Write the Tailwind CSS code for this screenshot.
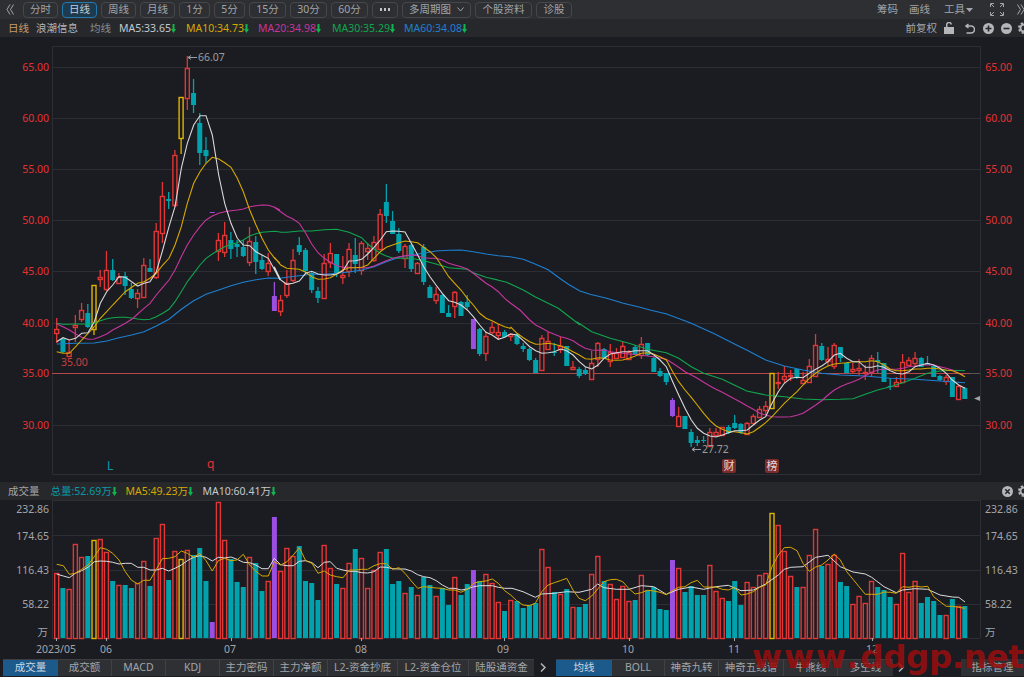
<!DOCTYPE html>
<html lang="zh">
<head>
	<meta charset="UTF-8">
	<title>浪潮信息 日线</title>
	<script src="https://cdn.jsdelivr.net/npm/@tailwindcss/browser@4"></script>
</head>
<body class="relative w-[1024px] h-[677px] overflow-hidden bg-[#1b1c21] text-[10.5px] leading-none text-[#a3a5a9] font-['Noto_Sans','Noto_Sans_CJK_SC',sans-serif]">

	<!-- toolbar -->
	<div class="flex items-center h-[19px] bg-[#2d2f33]">
		<svg class="ml-[6px] mr-[9px] w-[8px] h-[11px]" viewBox="0 0 8 11" fill="none" stroke="#a3a5a9"><path d="M4 .5 1 5.5l3 5M7.5 .5l-3 5 3 5"/></svg>
		<div class="flex gap-[4px]">
			<div class="flex items-center justify-center w-[35px] h-[16px] border border-[#45474c] rounded-sm">分时</div>
			<div class="flex items-center justify-center w-[35px] h-[16px] border border-[#2479ad] rounded-sm bg-[#1d3a4e] text-[#c8ccd0]">日线</div>
			<div class="flex items-center justify-center w-[35px] h-[16px] border border-[#45474c] rounded-sm">周线</div>
			<div class="flex items-center justify-center w-[35px] h-[16px] border border-[#45474c] rounded-sm">月线</div>
			<div class="flex items-center justify-center w-[31px] h-[16px] border border-[#45474c] rounded-sm">1分</div>
			<div class="flex items-center justify-center w-[31px] h-[16px] border border-[#45474c] rounded-sm">5分</div>
			<div class="flex items-center justify-center w-[37px] h-[16px] border border-[#45474c] rounded-sm">15分</div>
			<div class="flex items-center justify-center w-[37px] h-[16px] border border-[#45474c] rounded-sm">30分</div>
			<div class="flex items-center justify-center w-[37px] h-[16px] border border-[#45474c] rounded-sm">60分</div>
			<div class="flex items-center justify-center gap-[1.5px] w-[26px] h-[16px] border border-[#45474c] rounded-sm">
				<span class="w-[2.5px] h-[2.5px] bg-[#c0c2c6]"></span><span class="w-[2.5px] h-[2.5px] bg-[#c0c2c6]"></span><span class="w-[2.5px] h-[2.5px] bg-[#c0c2c6]"></span>
			</div>
			<div class="flex items-center justify-center gap-[6px] w-[69px] h-[16px] border border-[#45474c] rounded-sm">多周期图
				<svg class="w-[7px] h-[5px]" viewBox="0 0 7 5" fill="none" stroke="#a3a5a9"><path d="M.5 .5 3.5 4l3-3.5"/></svg>
			</div>
			<div class="flex items-center justify-center w-[57px] h-[16px] border border-[#45474c] rounded-sm">个股资料</div>
			<div class="flex items-center justify-center w-[36px] h-[16px] border border-[#45474c] rounded-sm">诊股</div>
		</div>
		<div class="flex items-center ml-auto">
			<span class="mr-[11px]">筹码</span>
			<span class="mr-[14px]">画线</span>
			<span>工具</span>
			<svg class="ml-[1px] mr-[17px] w-[7px] h-[4px]" viewBox="0 0 7 4" fill="#a3a5a9"><path d="M0 0h7L3.5 4z"/></svg>
			<svg class="mr-[13px] w-[14px] h-[13px]" viewBox="0 0 14 13" fill="none" stroke="#a3a5a9"><path d="M.5 4V.5H4M1 1l3 3M13.5 4V.5H10M13 1l-3 3M.5 9v3.5H4M1 12l3-3M13.5 9v3.5H10M13 12l-3-3"/></svg>
			<svg class="w-[7px] h-[11px]" viewBox="0 0 7 11" fill="none" stroke="#a3a5a9"><path d="M.5 .5 3.5 5.5l-3 5M4 .5l3 5-3 5"/></svg>
		</div>
	</div>

	<!-- ma legend -->
	<div class="flex items-center h-[18px] pl-[8px] bg-[#26282c]">
		<span class="mr-[7px] text-[#c59c6a]">日线</span>
		<span class="mr-[12px] text-[#b2b4b8]">浪潮信息</span>
		<span class="mr-[8px] text-[#8b8d91]">均线</span>
		<span class="flex items-center w-[67px] text-[#c4c8ce]">MA5:33.65<svg class="w-[5px] h-[9px]" viewBox="0 0 5 9" fill="#10b54f"><path d="M1.5 0h2v5H5L2.5 9 0 5h1.500z"/></svg></span>
		<span class="flex items-center w-[72px] text-[#d6a800]">MA10:34.73<svg class="w-[5px] h-[9px]" viewBox="0 0 5 9" fill="#10b54f"><path d="M1.5 0h2v5H5L2.5 9 0 5h1.500z"/></svg></span>
		<span class="flex items-center w-[74px] text-[#c8359e]">MA20:34.98<svg class="w-[5px] h-[9px]" viewBox="0 0 5 9" fill="#10b54f"><path d="M1.5 0h2v5H5L2.5 9 0 5h1.500z"/></svg></span>
		<span class="flex items-center w-[72px] text-[#10a64e]">MA30:35.29<svg class="w-[5px] h-[9px]" viewBox="0 0 5 9" fill="#10b54f"><path d="M1.5 0h2v5H5L2.5 9 0 5h1.500z"/></svg></span>
		<span class="flex items-center text-[#1e80d2]">MA60:34.08<svg class="w-[5px] h-[9px]" viewBox="0 0 5 9" fill="#10b54f"><path d="M1.5 0h2v5H5L2.5 9 0 5h1.500z"/></svg></span>
		<div class="flex items-center ml-auto">
			<span class="mr-[7px]">前复权</span>
			<svg class="mr-[11px] w-[10px] h-[12px]" viewBox="0 0 10 12" fill="#b4b6ba"><path d="M0 5h10v7H0zM2 5V3a3 3 0 0 1 6-.5H6.500A1.500 1.500 0 0 0 3.500 3v2z"/></svg>
			<svg class="mr-[8px] w-[10px] h-[11px]" viewBox="0 0 10 11" fill="none" stroke="#b4b6ba" stroke-width="1.500"><path d="M3.500 1 1 3l2.500 2M1 3h5a3.300 3.300 0 0 1 0 7H1.500"/></svg>
			<svg class="mr-[7px] w-[11px] h-[11px]" viewBox="0 0 11 11"><circle cx="5.500" cy="5.500" r="5.500" fill="#b4b6ba"/><path d="M2.500 5.500h6M5.500 2.500v6" stroke="#26282c" stroke-width="1.600"/></svg>
			<svg class="mr-[6px] w-[11px] h-[11px]" viewBox="0 0 11 11"><circle cx="5.500" cy="5.500" r="5.500" fill="#b4b6ba"/><path d="M2.500 5.500h6" stroke="#26282c" stroke-width="1.600"/></svg>
			<svg class="mr-[-6px] w-[12px] h-[12px]" viewBox="0 0 12 12"><circle cx="6" cy="6" r="3.500" fill="none" stroke="#b4b6ba" stroke-width="2"/><circle cx="6" cy="6" r="5" fill="none" stroke="#b4b6ba" stroke-width="2" stroke-dasharray="2.200 1.730"/></svg>
		</div>
	</div>

	<!-- price panel -->
	<svg id="price" class="block w-[1024px] h-[445px]" viewBox="0 37 1024 445">
		<g id="priceGrid" fill="none" stroke="#2d2e33">
			<path d="M52.500 46.500H980.500V474.500H52.500Z"/>
			<path d="M52 67.500H980M52 118.500H980M52 169.500H980M52 220.500H980M52 271.500H980M52 323.500H980M52 425.500H980"/>
		</g>
		<path d="M52 373.500H970" stroke="#b04848"/>
		<path d="M970 373.500H980" stroke="#55565a"/>
		<g id="candles"></g>
		<g id="priceLines" fill="none"></g>
		<g class="fill-[#e23232]" text-anchor="end">
			<text x="49" y="71">65.00</text><text x="49" y="122">60.00</text><text x="49" y="173">55.00</text><text x="49" y="224">50.00</text><text x="49" y="275">45.00</text><text x="49" y="327">40.00</text><text x="49" y="377">35.00</text><text x="49" y="429">30.00</text>
			<text x="1012" y="71">65.00</text><text x="1012" y="122">60.00</text><text x="1012" y="173">55.00</text><text x="1012" y="224">50.00</text><text x="1012" y="275">45.00</text><text x="1012" y="327">40.00</text><text x="1012" y="377">35.00</text><text x="1012" y="429">30.00</text>
		</g>
		<path d="M188 57.500H197M188 57.500l3-2M188 57.500l3 2" stroke="#9a9c9f" fill="none"/>
		<text x="198" y="61" class="fill-[#9a9c9f]">66.07</text>
		<text x="61" y="366" class="fill-[#c84040]">35.00</text>
		<path d="M692 449.500H701M692 449.500l3-2M692 449.500l3 2" stroke="#9a9c9f" fill="none"/>
		<text x="702" y="453" class="fill-[#9a9c9f]">27.72</text>
		<text x="107" y="470" class="fill-[#0a9aa8] text-[12px]">L</text>
		<text x="207" y="468" class="fill-[#e23232] text-[12px]">q</text>
		<rect x="722" y="459" width="14" height="14" rx="2" fill="#7c2b2b"/>
		<text x="729" y="470" text-anchor="middle" class="fill-[#e6d8d8] text-[11px]">财</text>
		<rect x="765" y="459" width="14" height="14" rx="2" fill="#7c2b2b"/>
		<text x="772" y="470" text-anchor="middle" class="fill-[#e6d8d8] text-[11px]">榜</text>
		<path d="M974 398.500l6-2.500v5z" fill="#a0a2a6"/>
	</svg>

	<!-- volume header -->
	<div class="flex items-center h-[18px] pl-[8px] bg-[#26282c]">
		<span class="mr-[11px]">成交量</span>
		<span class="flex items-center w-[75px] text-[#0a9aa8]">总量:52.69万<svg class="w-[5px] h-[9px]" viewBox="0 0 5 9" fill="#10b54f"><path d="M1.5 0h2v5H5L2.5 9 0 5h1.500z"/></svg></span>
		<span class="flex items-center w-[77px] text-[#d6a800]">MA5:49.23万<svg class="w-[5px] h-[9px]" viewBox="0 0 5 9" fill="#10b54f"><path d="M1.5 0h2v5H5L2.5 9 0 5h1.500z"/></svg></span>
		<span class="flex items-center text-[#c4c8ce]">MA10:60.41万<svg class="w-[5px] h-[9px]" viewBox="0 0 5 9" fill="#10b54f"><path d="M1.5 0h2v5H5L2.5 9 0 5h1.500z"/></svg></span>
		<div class="flex items-center ml-auto">
			<svg class="mr-[5px] w-[11px] h-[11px]" viewBox="0 0 11 11"><circle cx="5.500" cy="5.500" r="5.500" fill="#b4b6ba"/><path d="M3.300 3.300l4.400 4.400M7.700 3.300l-4.400 4.400" stroke="#26282c" stroke-width="1.600"/></svg>
			<svg class="mr-[-6px] w-[12px] h-[12px]" viewBox="0 0 12 12"><circle cx="6" cy="6" r="3.500" fill="none" stroke="#b4b6ba" stroke-width="2"/><circle cx="6" cy="6" r="5" fill="none" stroke="#b4b6ba" stroke-width="2" stroke-dasharray="2.200 1.730"/></svg>
		</div>
	</div>

	<!-- volume panel -->
	<svg id="volume" class="block w-[1024px] h-[158px]" viewBox="0 500 1024 158">
		<g fill="none" stroke="#2d2e33">
			<path d="M52 500.500H980M52.500 500V638M980.500 500V638M52 535.500H980M52 570.500H980M52 604.500H980M52 638.500H980"/>
		</g>
		<g id="bars"></g>
		<g id="volLines" fill="none"></g>
		<path d="M56.500 638v3M106.500 638v3M231.500 638v3M361.500 638v3M504.500 638v3M629.500 638v3M734.500 638v3M872.500 638v3" stroke="#a3a5a9"/>
		<g class="fill-[#a3a5a9]" text-anchor="end">
			<text x="49" y="513">232.86</text><text x="49" y="540">174.65</text><text x="49" y="574">116.43</text><text x="49" y="608">58.22</text><text x="48" y="636">万</text>
		</g>
		<g class="fill-[#a3a5a9]">
			<text x="985" y="513">232.86</text><text x="985" y="540">174.65</text><text x="985" y="574">116.43</text><text x="985" y="608">58.22</text><text x="985" y="636">万</text>
			<text x="36" y="653">2023/05</text><text x="100" y="653">06</text><text x="224" y="653">07</text><text x="355" y="653">08</text><text x="497" y="653">09</text><text x="622" y="653">10</text><text x="728" y="653">11</text><text x="866" y="653">12</text>
		</g>
	</svg>

	<!-- indicator tabs -->
	<div class="flex items-center h-[19px] pl-[3px] pb-[1px]">
		<div class="flex h-[17px] bg-[#2e3034] border-t border-[#3c3e42]">
			<div class="flex items-center justify-center w-[55px] bg-[#1c5a8c] text-[#d0d8e0]">成交量</div>
			<div class="flex items-center justify-center w-[54px] border-r border-[#3f4145]">成交额</div>
			<div class="flex items-center justify-center w-[54px] border-r border-[#3f4145]">MACD</div>
			<div class="flex items-center justify-center w-[54px] border-r border-[#3f4145]">KDJ</div>
			<div class="flex items-center justify-center w-[54px] border-r border-[#3f4145]">主力密码</div>
			<div class="flex items-center justify-center w-[54px] border-r border-[#3f4145]">主力净额</div>
			<div class="flex items-center justify-center w-[70px] border-r border-[#3f4145]">L2-资金抄底</div>
			<div class="flex items-center justify-center w-[71px] border-r border-[#3f4145]">L2-资金仓位</div>
			<div class="flex items-center justify-center w-[65px]">陆股通资金</div>
		</div>
		<svg class="ml-[5px] mr-[9px] w-[8px] h-[9px]" viewBox="0 0 8 9" fill="none" stroke="#b4b6ba" stroke-width="1.500"><path d="M2 .5 6 4.500l-4 4"/></svg>
		<div class="flex h-[17px] bg-[#2e3034] border-t border-[#3c3e42]">
			<div class="flex items-center justify-center w-[56px] bg-[#1c5a8c] text-[#d0d8e0]">均线</div>
			<div class="flex items-center justify-center w-[53px] border-r border-[#3f4145]">BOLL</div>
			<div class="flex items-center justify-center w-[54px] border-r border-[#3f4145]">神奇九转</div>
			<div class="flex items-center justify-center w-[65px] border-r border-[#3f4145]">神奇五线谱</div>
			<div class="flex items-center justify-center w-[54px] border-r border-[#3f4145]">牛熊线</div>
			<div class="flex items-center justify-center w-[55px]">多空线</div>
		</div>
		<svg class="ml-[4px] w-[8px] h-[9px]" viewBox="0 0 8 9" fill="none" stroke="#b4b6ba" stroke-width="1.500"><path d="M2 .5 6 4.500l-4 4"/></svg>
		<div class="flex items-center justify-center ml-auto w-[63px] h-[17px] bg-[#2e3034]">指标管理</div>
	</div>

	<!-- watermark -->
	<div class="absolute left-[752px] top-[638px] whitespace-nowrap text-[32.5px] leading-[38px] font-bold text-[#960f0f]/90 font-['DejaVu_Sans',sans-serif]"><span class="tracking-[2px]">www.</span><span class="tracking-[-0.4px]">ddgp.net</span></div>

<script>
const NS = "http://www.w3.org/2000/svg";
const RED = "#e03636", TEAL = "#00a3ad", YELLOW = "#e0b400", PURPLE = "#9a4fe0";
const COLORS = { r: RED, t: TEAL, y: YELLOW, p: PURPLE };
const STEP = 6.22, FIRST = 56.7;

function add(parent, tag, attrs) {
	let el = document.createElementNS(NS, tag);
	for (let k in attrs) el.setAttribute(k, attrs[k]);
	parent.appendChild(el);
}

// [color, high, top, bottom, low], read off the picture in crop coordinates
const candleBlocks = [
	[50, "r803,836,850,880 t865,868,905,910 r870,907,917,918 r795,826,830,875 r760,780,808,815 t763,790,830,835 y705,705,838,855 r660,681,686,712 r603,660,716,722 t627,660,690,692 r668,680,700,702 t665,677,708,735 t700,716,745,748 r716,730,744,773 r625,646,742,742 t627,654,665,667 r520,543,680,687 r395,438,548,580 t425,446,454,478 r300,316,464,470 y142,142,263,312 r18,55,143,180 t88,128,165,188 t190,220,310,345 t260,300,318,340 p487,487,489,489 r550,570,603,632 r515,556,605,622 t547,571,598,627 t570,583,592,622 t570,590,619,622 r532,572,637,648 t558,577,635,673 t615,630,656,660 r610,640,664,678"],
	[170, "p337,377,422,422 r376,391,422,437 r300,338,375,385 r238,271,330,335 t202,225,246,255 t235,240,303,310 t305,308,360,368 t352,364,384,398 r252,279,384,385 r220,248,276,295 t252,252,310,322 r258,315,322,342 r220,238,303,322 t205,255,283,308 r212,220,300,315 r220,234,243,270 r198,216,270,275 r118,132,236,240 t42,97,138,158 t123,153,191,193 t175,192,244,248 r222,229,265,293 t222,225,298,305 r275,279,309,312 t222,232,335,346 t345,351,384,385 r350,373,390,403 t372,375,429,430 t405,430,440,440 r363,365,407,443 t392,396,437,438 t375,397,411,418 p447,447,536,536 t475,478,552,558 r487,497,550,572 r455,472,486,493 r463,485,495,510"],
	[310, "t60,66,80,85 r68,72,78,93 t70,72,103,105 t98,108,116,125 t115,118,151,152 t145,151,189,189 r75,85,181,182 r65,94,117,120 t100,125,127,138 r80,108,118,130 t108,109,167,168 r152,171,176,178 t172,176,198,203 t170,180,193,195 r122,160,207,208 r95,100,148,170 t115,118,148,148 r102,125,152,170 r115,128,145,145 r95,108,140,140 r120,125,148,150 t105,110,135,135 r80,102,135,148 t100,100,135,138 t140,144,186,187 t175,184,198,200 t188,190,217,225 p265,271,319,320 r292,317,347,352 t317,319,356,356 t358,365,400,412 t378,390,398,408 t378,390,394,400 r355,365,408,410 r355,367,375,380 r350,352,374,378 t345,352,368,372 t315,339,355,358 t340,342,370,372"],
	[310, "r337,340,372,373 r312,318,338,342 r288,296,320,320 r272,289,300,315 y190,190,295,296 r185,216,219,237 r168,198,208,220 r180,195,198,213 t178,178,205,207 r185,210,218,220 r148,168,215,216 r72,104,198,198 t100,108,150,152 r112,148,152,167 r98,104,168,177 t110,112,145,155 t155,158,190,190 r158,178,184,190 r148,175,180,195 r165,185,189,210 r135,145,185,198 t125,150,155,190 t160,160,216,217 t205,228,231,240 r200,217,227,228 r132,157,215,218 r140,150,165,165 r125,145,158,170 t140,143,170,172 t138,160,165,165 t165,167,200,202 t195,198,210,212 r195,200,213,225 t200,200,260,261 r225,229,268,270 t232,234,267,268"],
];

function drawCandles() {
	let g = document.getElementById("candles");
	let i = 0;
	candleBlocks.forEach(([oy, text]) => {
		text.split(" ").forEach(item => {
			let c = item[0];
			let [hi, top, bot, lo] = item.slice(1).split(",").map(n => Math.round(oy + Number(n) / 3));
			let x = FIRST + STEP * i;
			let color = COLORS[c];
			add(g, "path", { d: `M${x} ${hi}V${top}M${x} ${bot}V${lo}`, stroke: color, "stroke-width": 1.3 });
			if (c == "t" || c == "p")
				add(g, "rect", { x: x - 2.5, y: top, width: 5, height: Math.max(bot - top, 1), fill: color });
			else
				add(g, "rect", { x: x - 2, y: top + 0.5, width: 4, height: Math.max(bot - top, 1), fill: "#1b1c21", stroke: color, "stroke-width": 1.4 });
			i++;
		});
	});
}

// curves: crop origin x, crop origin y, then "x,y" pairs at 3x
function curve(parts) {
	let pts = [];
	parts.forEach(([ox, oy, text]) => {
		text.split(" ").forEach(p => {
			let [x, y] = p.split(",").map(Number);
			pts.push([ox + x / 3, oy + y / 3]);
		});
	});
	return "M" + pts.map(p => p[0].toFixed(1) + " " + p[1].toFixed(1)).join("L");
}

const priceCurves = [
	["#1e80d2", [
		[40, 50, "50,882 107,880 163,879 200,873 237,863 275,855 312,845 349,828 387,808 424,778 461,752 498,733 536,720 573,707 610,697 648,689 685,684 720,685"],
		[270, 170, "50,322 88,317 125,313 163,313 200,310 237,306 275,300 312,290 349,275 387,262 424,254 461,250 498,243 536,241 573,240 610,245 648,252 685,257 720,260"],
		[490, 235, "100,73 130,85 175,104 205,127 235,148 270,168 300,178 350,190 400,205 450,217"],
		[500, 310, "450,0 500,12 570,38 640,70 720,110"],
		[730, 310, "50,120 107,150 163,168 219,180 275,190 331,195 406,198 481,205 555,208 630,213 705,218"]]],
	["#10a64e", [
		[40, 50, "50,820 69,823 88,823 107,822 125,822 144,823 163,820 181,812 200,806 218,803 237,802 256,802 275,804 293,807 312,809 330,808 349,800 368,790 387,778 405,755 424,725 442,695 461,670 480,645 498,625 517,612 536,600 554,590 573,583 592,578 610,570 629,558 648,551 666,547 685,545 704,544 720,546"],
		[270, 170, "32,187 50,187 88,183 125,183 163,179 200,178 237,187 275,203 293,222 312,237 331,250 349,258 368,264 387,265 424,265 461,272 498,282 536,293 573,296 592,298 610,308 648,322 685,330"],
		[490, 235, "0,130 50,142 100,165 135,185 205,220 270,270"],
		[500, 310, "230,35 275,65 331,85 387,100 443,118 499,128 536,145 574,170 611,190 667,208 720,233"],
		[730, 310, "50,243 107,255 163,260 219,267 275,269 331,268 369,266 406,253 443,240 481,230 518,218 555,205 592,190 630,183 667,181 705,182"]]],
	["#c8359e", [
		[40, 50, "50,822 69,830 88,840 107,852 125,862 144,868 163,867 181,860 200,852 218,840 237,830 256,820 275,808 293,792 312,775 330,760 349,735 368,712 387,690 405,660 424,620 442,585 461,555 480,530 498,510 517,498 536,490 554,485 573,482 592,480 610,477 629,470 648,467 666,465 685,466 704,472 720,480"],
		[270, 170, "13,112 32,125 50,138 69,147 88,160 107,190 125,222 144,248 163,265 181,277 200,287 219,292 237,292 256,293 275,293 293,293 312,288 331,280 349,272 368,265 387,260 405,257 424,255 443,257 461,263 480,265 498,265 517,270 536,280 554,285 573,290 592,297 610,310 629,325 648,340 666,350 685,365 704,385 720,398"],
		[500, 310, "60,0 89,30 107,45 126,55 145,65 163,73 182,80 200,85 219,92 238,105 256,115 275,120 294,121 312,120 331,125 350,128 368,130 387,132 406,133 424,136 443,138 462,140 480,144 499,148 518,160 536,172 555,185 574,195 592,205 611,217 630,228 648,238 667,247 686,257 704,267 720,275"],
		[730, 310, "52,288 70,298 89,310 107,315 126,320 145,321 163,321 182,320 201,316 219,310 238,298 257,285 275,272 294,255 313,240 331,230 350,222 369,215 387,208 406,197 425,187 443,180 462,177 481,178 499,178 518,175 537,170 555,168 574,165 592,165 611,165 630,170 649,175 667,180 686,190 700,195"]]],
	["#d6a800", [
		[40, 50, "50,905 69,910 88,910 107,890 125,870 144,850 163,830 181,805 200,785 218,765 237,745 256,725 275,712 293,700 312,695 330,685 349,670 368,645 387,625 405,585 424,530 442,460 461,400 480,365 498,340 517,322 536,327 554,338 573,352 592,385 610,425 629,480 648,525 666,565 685,600 704,625 720,640"],
		[270, 170, "13,262 32,285 50,295 69,296 88,298 107,307 125,320 144,328 163,327 181,323 200,312 219,300 237,293 256,293 275,292 293,285 312,265 331,245 349,232 368,225 387,218 405,213 424,215 443,218 461,232 480,245 498,262 517,290 536,320 554,340 573,360 592,385 610,405 629,430 648,445 666,452 685,462 704,470 720,475"],
		[500, 310, "33,52 51,70 70,83 89,95 107,103 126,102 145,100 163,103 182,108 200,115 219,125 238,135 256,146 275,148 294,143 312,145 331,150 350,151 368,150 387,145 406,138 424,130 443,128 462,133 480,140 499,150 518,185 536,215 555,240 574,262 592,285 611,310 630,332 648,348 667,358 686,365 704,365 723,368"],
		[730, 310, "52,372 70,365 89,352 107,338 126,320 145,300 163,280 182,262 201,245 219,225 238,205 257,190 275,178 294,168 313,162 331,160 350,158 369,155 387,155 406,155 425,152 443,155 462,165 481,178 499,182 518,182 537,180 555,177 574,177 592,175 611,175 630,177 649,180 667,182 686,190 705,200"]]],
	["#d8d8da", [
		[40, 50, "50,875 69,863 88,870 107,865 125,850 144,848 163,815 181,760 200,725 218,705 237,680 256,682 275,695 293,708 312,700 330,695 349,665 368,600 387,530 405,470 424,355 442,280 461,225 480,197 498,197 517,255 536,375 554,460 573,520 592,565 610,585 629,587 648,605 666,615 685,625 704,660 720,690"],
		[270, 170, "13,290 32,330 50,343 69,340 88,333 107,310 125,304 144,312 163,315 181,315 200,312 219,302 237,273 256,272 275,268 293,252 312,232 331,210 349,185 368,183 387,184 405,186 424,220 443,255 461,290 480,320 498,345 517,370 536,392 554,397 573,405 592,420 610,440 629,465 648,487 666,495 685,508 704,502 720,493"],
		[500, 310, "33,72 51,75 70,92 89,110 107,122 126,130 145,128 163,125 182,117 200,122 219,135 238,155 256,170 275,177 294,165 312,145 331,132 350,128 368,125 387,125 406,122 424,122 443,122 462,135 480,150 499,170 518,215 536,255 555,295 574,330 592,355 611,370 630,378 648,381 667,375 686,368 704,362 723,362"],
		[730, 310, "52,360 70,345 89,330 107,320 126,280 145,245 163,220 182,205 201,202 219,203 238,190 257,178 275,168 294,155 313,135 331,130 350,145 369,155 387,155 406,172 425,172 443,167 462,172 481,182 499,190 518,192 537,185 555,170 574,165 592,160 611,165 630,175 649,190 667,210 686,225 705,235"]]],
];

// bar tops, 3x crop coordinates, base line at 505
const barBlocks = [
	"r308 t355 r358 r223 r262 t257 y209 r207 r247 t332 r346 t345 t355 r340 r273 t348 r205 r163 t329 r244 y268 r241 t254 t233 t332 p457 r95 r209 t268 t337 t350 r260 t279 t364 r334 p140 r303 r233 r258 t228 t332 t340 t390 r226 r295 t342 r353 r278 t238 r265 r353 r300 r247 t238 t342 t332 r370 t350 r375 t320 t345 r378 t355 t405 r322 t375 t342 p299 t332 r313 r340 r397 t422 r391",
	"t393 t413 t405 t400 r238 r292 t367 r372 t358 r412 t411 t401 r313 r257 t334 r343 r388 r348 r392 t390 r316 t360 t352 t417 t420 p270 r295 t365 t348 t375 t374 r286 r363 r383 t393 t334 t405 r337 r352 r316 r310 y130 r164 r244 r319 t350 r351 r255 r176 t288 r281 r255 t337 t348 r403 r377 r400 r332 t350 t361 t382 r401 r250 r367 r334 t400 t382 t393 t435 r436 t387 r407 t408",
];

function drawBars() {
	let g = document.getElementById("bars");
	let i = 0;
	barBlocks.join(" ").split(" ").forEach(item => {
		let c = item[0];
		let y = Math.round(470 + Number(item.slice(1)) / 3);
		let x = FIRST + STEP * i;
		let color = COLORS[c];
		if (c == "t" || c == "p")
			add(g, "rect", { x: x - 2.5, y: y, width: 5, height: 638 - y, fill: color });
		else
			add(g, "rect", { x: x - 2, y: y + 0.5, width: 4, height: 638 - y, fill: "#1b1c21", stroke: color, "stroke-width": 1.4 });
		i++;
	});
}

const volCurves = [
	["#dcdcde", [
		[0, 470, "170,312 190,318 208,323 226,310 245,302 264,292 283,275 301,273 320,274 338,277 357,282 376,280 394,280 413,292 431,292 450,300 469,300 487,295 506,303 525,295 544,285 562,272 581,262 599,257 618,262 637,273 655,262 674,264 693,261 711,268 730,277 749,278 767,285 786,296 805,296 823,265 842,284 861,287 880,287 898,274 917,272 936,278 954,293 973,277 991,275 1010,295 1029,300 1048,304 1066,304 1085,308 1103,309 1122,305 1141,291 1159,292 1178,296 1197,297 1215,297 1234,303 1253,314 1271,320 1290,323 1309,332 1327,345 1346,355 1365,355 1383,360 1402,357 1421,350 1439,347 1458,347 1477,347 1495,352 1514,355 1536,355"],
		[512, 470, "33,365 70,382 89,372 127,370 164,365 201,367 239,358 257,342 276,353 313,358 351,358 388,347 425,350 463,373 500,358 537,351 575,358 612,350 649,346 687,362 724,360 761,342 799,315 817,298 836,292 873,290 911,262 948,256 985,290 1023,306 1060,312 1079,322 1116,350 1153,368 1172,360 1209,356 1247,358 1284,375 1321,381 1340,382 1359,396"]]],
	["#d6a800", [
		[0, 470, "170,283 190,287 208,313 226,310 245,298 264,285 283,260 301,233 320,238 338,250 357,270 376,305 394,330 413,342 431,331 450,331 469,298 487,266 506,265 525,260 544,243 562,250 581,262 599,250 618,272 637,303 655,272 674,265 693,272 711,270 730,253 749,285 767,303 786,318 805,318 823,275 842,285 861,275 880,255 898,233 917,272 936,280 954,310 973,303 991,315 1010,320 1029,323 1048,300 1066,300 1085,298 1103,298 1122,287 1141,281 1159,281 1178,298 1197,293 1215,310 1234,333 1253,355 1271,350 1290,352 1309,354 1327,355 1346,360 1365,360 1383,367 1402,358 1421,340 1439,335 1458,333 1477,327 1495,340 1514,362 1533,376"],
		[512, 470, "14,392 33,405 52,407 70,400 89,365 108,345 127,338 145,332 164,325 183,360 201,385 220,392 239,378 257,357 276,335 295,329 313,328 332,335 351,356 369,372 388,368 407,361 425,363 444,367 463,374 481,362 500,352 519,350 537,338 556,331 575,351 593,351 612,351 631,358 649,360 668,352 687,375 705,372 724,365 743,352 761,345 780,290 799,255 817,233 836,232 855,242 873,280 892,304 911,291 929,285 948,270 967,252 985,270 1004,305 1023,328 1041,350 1060,373 1079,373 1097,373 1116,366 1135,367 1153,370 1172,350 1191,352 1209,348 1228,351 1247,349 1265,380 1284,395 1303,409 1321,409 1340,412 1359,415"]]],
];

drawCandles();
drawBars();
priceCurves.forEach(([color, parts]) => add(document.getElementById("priceLines"), "path", { d: curve(parts), stroke: color, "stroke-width": 1.1 }));
volCurves.forEach(([color, parts]) => add(document.getElementById("volLines"), "path", { d: curve(parts), stroke: color, "stroke-width": 1 }));
</script>
</body>
</html>
